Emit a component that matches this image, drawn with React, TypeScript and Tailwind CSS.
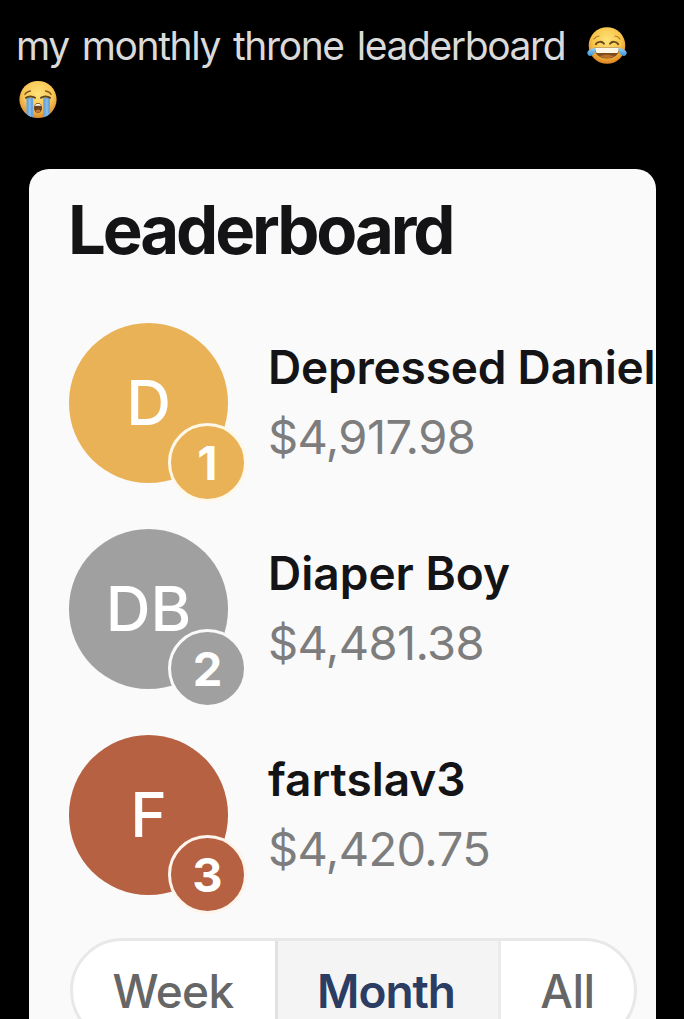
import clsx from "clsx";

/* ---------- Emojis ---------- */
const JoyEmoji = () => (
  <svg viewBox="0 0 40 40" className="h-10 w-10 shrink-0">
    <defs>
      <radialGradient id="joyFace" cx="50%" cy="35%" r="65%">
        <stop offset="0" stopColor="#ffe27a" />
        <stop offset="0.6" stopColor="#f9c548" />
        <stop offset="1" stopColor="#dc8424" />
      </radialGradient>
      <linearGradient id="joyTear" x1="0" y1="0" x2="0" y2="1">
        <stop offset="0" stopColor="#9ad8f5" />
        <stop offset="1" stopColor="#3f94dc" />
      </linearGradient>
    </defs>
    <circle cx="20" cy="19.500" r="18.300" fill="url(#joyFace)" />
    <path d="M7 13c1.200-1.800 3-2.900 5-3M33 13c-1.200-1.800-3-2.900-5-3" fill="none" stroke="#a8742a" strokeWidth="1.200" strokeLinecap="round" />
    <path d="M8.800 18.200c1.600-3 6.400-3.200 8.200-.4M31.200 18.200c-1.600-3-6.400-3.200-8.200-.4" fill="none" stroke="#6b4a1e" strokeWidth="1.900" strokeLinecap="round" />
    <path d="M7.600 21.400h24.800c.4 6.600-5 11-12.400 11S7.200 28 7.600 21.400z" fill="#7c4c1c" />
    <path d="M8.200 21.800h23.600c.2 2.600-.6 4.600-1.600 5.200H9.800c-1-.6-1.800-2.600-1.600-5.200z" fill="#fff6e4" />
    <path d="M13 30.300c4-2 10-2 14 0-4 2.400-10 2.400-14 0z" fill="#b8702c" />
    <path d="M8.400 21.200c.4 4.200-1.400 8.600-5 8.700-2.800.1-4-2.900-2.300-5 1.700-2 5-2.200 7.300-3.700zM31.600 21.200c-.4 4.200 1.400 8.600 5 8.700 2.800.1 4-2.900 2.300-5-1.700-2-5-2.200-7.300-3.700z" fill="url(#joyTear)" />
  </svg>
);

const SobEmoji = () => (
  <svg viewBox="0 0 40 40" className="h-10 w-10 shrink-0">
    <defs>
      <radialGradient id="sobFace" cx="50%" cy="35%" r="65%">
        <stop offset="0" stopColor="#ffe27a" />
        <stop offset="0.6" stopColor="#f9c755" />
        <stop offset="1" stopColor="#dc8a2c" />
      </radialGradient>
      <clipPath id="sobClip">
        <circle cx="20" cy="19.500" r="18.600" />
      </clipPath>
    </defs>
    <circle cx="20" cy="19.500" r="18.600" fill="url(#sobFace)" />
    <g clipPath="url(#sobClip)">
      <path d="M8.400 18h6.800v21H8.400zM25.200 18H32v21h-6.800z" fill="#6aa5dc" />
      <path d="M10.600 19h2.200v20h-2.200zM27.600 19h2.200v20h-2.200z" fill="#85baea" />
    </g>
    <path d="M6.800 14.500c1.300-2.100 3.200-3.200 5.600-3.500M33.200 14.500c-1.300-2.100-3.200-3.200-5.600-3.500" fill="none" stroke="#7d571f" strokeWidth="1.300" strokeLinecap="round" />
    <path d="M8 17.800c2.400-1.800 6.600-1.700 9 0M32 17.800c-2.400-1.800-6.600-1.700-9 0" fill="none" stroke="#5c4620" strokeWidth="2" strokeLinecap="round" />
    <ellipse cx="20" cy="28" rx="4" ry="5" fill="#6b3f1c" />
    <path d="M16.700 25.800c1.200-2.800 5.400-2.800 6.600 0z" fill="#fff" />
    <ellipse cx="20" cy="31" rx="2.600" ry="1.600" fill="#c17a3c" />
  </svg>
);

/* ---------- Leaderboard ---------- */
const entries = [
  { rank: 1, initials: "D", name: "Depressed Daniel", amount: "$4,917.98", color: "bg-[#e9b257]", ring: "border-[#fff8e8]", spacing: "tracking-[-0.2px]" },
  { rank: 2, initials: "DB", name: "Diaper Boy", amount: "$4,481.38", color: "bg-[#a0a0a0]", ring: "border-[#fafafa]", spacing: "tracking-[0px]" },
  { rank: 3, initials: "F", name: "fartslav3", amount: "$4,420.75", color: "bg-[#b66141]", ring: "border-[#fff4ec]", spacing: "tracking-[0px]" },
];

const Avatar = ({ initials, rank, color, ring }: { initials: string; rank: number; color: string; ring: string }) => (
  <div className={clsx("relative flex h-40 w-[159px] shrink-0 items-center justify-center rounded-full", color)}>
    <span className="text-[62px] leading-none font-medium text-white">{initials}</span>
    <span
      className={clsx(
        "absolute -right-[19px] -bottom-[19px] flex h-[79px] w-[79px] items-center justify-center rounded-full border-[3px] text-[47px] leading-none font-bold text-white",
        color,
        ring,
      )}
    >
      {rank}
    </span>
  </div>
);

const tabs = [
  { label: "Week", className: "w-[202px] pr-0.5 font-medium tracking-[-0.6px] text-[#666666]" },
  { label: "Month", className: "w-[226px] border-x-[3px] border-l-[#e2e2e4] border-r-[#ebebec] bg-[#f4f4f5] pr-1 font-semibold tracking-[-1px] text-[#2c3d63]" },
  { label: "All", className: "flex-1 font-medium tracking-[-0.4px] text-[#666666]" },
];

export default function App() {
  return (
    <main className="h-[1019px] w-[684px] overflow-hidden bg-black pt-[19px] font-['Inter',sans-serif]">
      <header className="h-[150px] pl-4 text-[39px] leading-[54px] tracking-[-1.4px] text-[#dadada] [word-spacing:3.5px]">
        <div className="flex h-[54px] items-center">
          <span className="w-[571px] whitespace-nowrap">my monthly throne leaderboard</span>
          <JoyEmoji />
        </div>
        <div className="flex h-[54px] items-center pl-0.5">
          <SobEmoji />
        </div>
      </header>

      <section className="ml-[29px] h-[900px] w-[627px] overflow-hidden rounded-t-[20px] bg-[#fafafa] pt-[21px] pl-10">
        <h1 className="-ml-px h-[80px] text-[67px] leading-[80px] font-bold tracking-[-3.1px] text-[#141416]">Leaderboard</h1>

        <ul className="mt-[53px] flex flex-col gap-[46px]">
          {entries.map((e) => (
            <li key={e.rank} className="flex h-40 gap-10">
              <Avatar initials={e.initials} rank={e.rank} color={e.color} ring={e.ring} />
              <div className="pt-[9px] whitespace-nowrap">
                <p className={clsx("text-[46px] leading-[70px] font-semibold text-[#141416]", e.spacing)}>{e.name}</p>
                <p className="text-[47px] leading-[70px] tracking-[-0.6px] text-[#7d7d7d]">{e.amount}</p>
              </div>
            </li>
          ))}
        </ul>

        <div className="mt-[43px] ml-px flex h-[105px] w-[567px] overflow-hidden rounded-full border-[3px] border-[#e8e8ea] bg-white">
          {tabs.map((t) => (
            <button key={t.label} className={clsx("text-[46px] leading-none", t.className)}>
              {t.label}
            </button>
          ))}
        </div>
      </section>
    </main>
  );
}
